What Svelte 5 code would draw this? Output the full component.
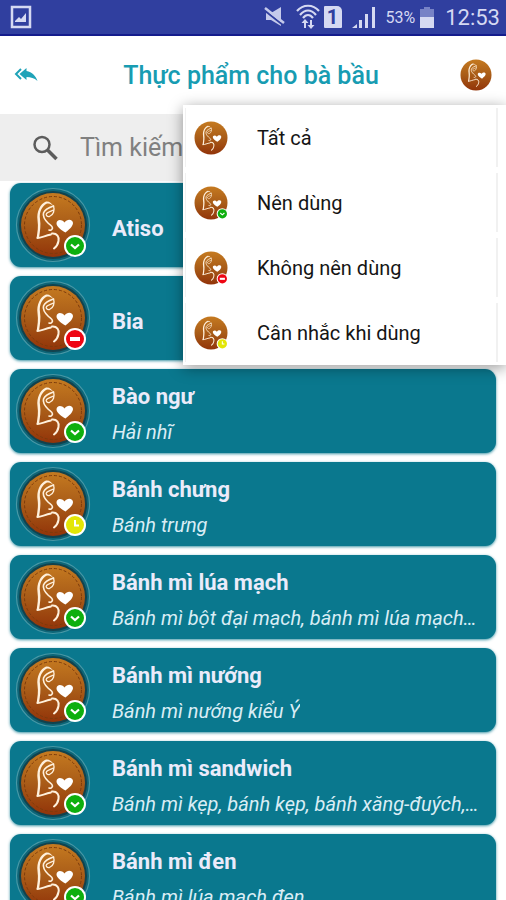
<script lang="ts">
	type Status = 'good' | 'bad' | 'careful';

	interface Food {
		name: string;
		alias?: string;
		status: Status;
	}

	interface Filter {
		label: string;
		status?: Status;
	}

	const foods: Food[] = [
		{ name: 'Atiso', status: 'good' },
		{ name: 'Bia', status: 'bad' },
		{ name: 'Bào ngư', alias: 'Hải nhĩ', status: 'good' },
		{ name: 'Bánh chưng', alias: 'Bánh trưng', status: 'careful' },
		{ name: 'Bánh mì lúa mạch', alias: 'Bánh mì bột đại mạch, bánh mì lúa mạch…', status: 'good' },
		{ name: 'Bánh mì nướng', alias: 'Bánh mì nướng kiểu Ý', status: 'good' },
		{ name: 'Bánh mì sandwich', alias: 'Bánh mì kẹp, bánh kẹp, bánh xăng-đuých,…', status: 'good' },
		{ name: 'Bánh mì đen', alias: 'Bánh mì lúa mạch đen', status: 'good' }
	];

	const filters: Filter[] = [
		{ label: 'Tất cả' },
		{ label: 'Nên dùng', status: 'good' },
		{ label: 'Không nên dùng', status: 'bad' },
		{ label: 'Cân nhắc khi dùng', status: 'careful' }
	];

	let query = $state('');
	let menuOpen = $state(true);
	let selected = $state<Status | undefined>(undefined);

	const visibleFoods = $derived(
		foods.filter(
			(food) =>
				(!selected || food.status === selected) &&
				food.name.toLowerCase().includes(query.toLowerCase())
		)
	);

	function pickFilter(filter: Filter) {
		selected = filter.status;
		menuOpen = false;
	}
</script>

{#snippet emblem(status: Status | undefined, small: boolean)}
	<svg class="emblem" viewBox={small ? '5 5 66 66' : '0 0 76 76'} aria-hidden="true">
		<defs>
			<linearGradient id="leather" x1="0" y1="0" x2="0" y2="1">
				<stop offset="0" stop-color="#c57a20" />
				<stop offset="0.5" stop-color="#a95c18" />
				<stop offset="1" stop-color="#923409" />
			</linearGradient>
		</defs>
		{#if !small}
			<circle cx="38" cy="38" r="36.5" fill="#0d6577" stroke="#4898a6" stroke-width="1.2" />
			<circle cx="38" cy="38" r="34" fill="#12424d" />
		{/if}
		<circle cx="38" cy="38" r="32" fill="url(#leather)" />
		{#if !small}
			<circle cx="38" cy="38" r="28.5" fill="none" stroke="#7c3b0c" stroke-width="1" stroke-dasharray="3 2" />
		{/if}
		<!-- veil, face, arm and belly -->
		<path
			d="M39 20C37 16 34 14 31 14.500C25 17 21.500 25 22.500 33C23.500 40 22.500 45 21.500 51.500L24 51C25 44 26 38 25 32C24 25 27 19 32 16.500C35 16 37 17.500 39 20Z"
			fill="#fff0dc"
		/>
		<g fill="none" stroke="#fff0dc" stroke-linecap="round" stroke-linejoin="round">
			<path d="M38.500 19C35.500 20 30 22 28.500 26C27.500 30 30 33 33 36C35 38 37.500 39 37.500 41C37 43 35.500 43.500 34 43" stroke-width="1.600" />
			<path d="M38.500 19C40 23 38.500 28 34.500 29.500C32 30 30.500 28 31.500 26.500C33 24.500 36 24.500 38.500 23" stroke-width="1.300" />
			<path d="M22.500 51C26 51 30 48.500 36 47.500" stroke-width="1.800" />
			<path d="M37 46.500C42 46 44.500 50 43.500 54C43 57 41 60 39 61.500" stroke-width="2" />
		</g>
		<path
			d="M50.500 45.500C47 43.500 41.500 40 41.500 36.500C41.500 33 46 31.500 49.500 35.500C52.500 31 58 32.500 58 36C58 39.500 53.500 43 50.500 45.500Z"
			fill="#fff"
		/>
		{#if status}
			<circle cx="60" cy="59" r="11" fill="#fff" />
			{#if status === 'good'}
				<circle cx="60" cy="59" r="9" fill="#0eaf0e" />
				<path d="M56 57.500L60 61L64 57.500" fill="none" stroke="#fff" stroke-width="2.200" />
			{:else if status === 'bad'}
				<circle cx="60" cy="59" r="9" fill="#ee0613" />
				<rect x="55" y="57" width="10" height="4" fill="#fff" />
			{:else}
				<circle cx="60" cy="59" r="9" fill="#e3e606" />
				<path d="M60 54V59.500H64" fill="none" stroke="#fff" stroke-width="2" />
			{/if}
		{/if}
	</svg>
{/snippet}

<div class="screen">
	<div class="status-bar">
		<svg width="22" height="24" viewBox="0 0 22 24" aria-hidden="true">
			<rect x="2" y="2" width="18" height="20" fill="none" stroke="#d5d9f2" stroke-width="2.500" />
			<path d="M5 16L9 12L11 14L16 8V17H5Z" fill="#d5d9f2" />
		</svg>
		<div class="indicators">
			<svg width="22" height="22" viewBox="0 0 22 22" aria-hidden="true">
				<path d="M2 7H7L17 1V20L7 14H2Z" fill="#c5caeb" />
				<path d="M0 4L19 19" stroke="#303f9f" stroke-width="2" />
				<path d="M1 2L20 17" stroke="#c5caeb" stroke-width="2.500" />
			</svg>
			<svg class="wifi" width="24" height="26" viewBox="0 0 24 26" aria-hidden="true">
				<g fill="none" stroke="#d5d9f2" stroke-width="2.200">
					<path d="M1 7C7 0 17 0 23 7" />
					<path d="M4 11C9 5 15 5 20 11" />
					<path d="M7 14C10 10 14 10 17 14" />
				</g>
				<path d="M9 15L5.500 19H8V24H10V19H12.500ZM15 25L18.500 21H16V16H14V21H11.500Z" fill="#d5d9f2" />
			</svg>
			<span class="sim">1</span>
			<svg class="signal" width="24" height="22" viewBox="0 0 24 22" aria-hidden="true">
				<path d="M0 22L5 18V22ZM7 14H10V22H7ZM13 8H16V22H13ZM20 1H23V22H20Z" fill="#d5d9f2" />
			</svg>
			<span class="percent">53%</span>
			<svg class="battery" width="16" height="21" viewBox="0 0 16 21" aria-hidden="true">
				<path d="M5 0H11V2H15V11H1V2H5Z" fill="#7782c6" />
				<path d="M1 10H15V21H1Z" fill="#d5d9f2" />
			</svg>
			<span class="clock">12:53</span>
		</div>
	</div>

	<header class="toolbar">
		<button class="icon-button" aria-label="Quay lại">
			<svg width="24" height="14" viewBox="0 0 24 14" aria-hidden="true">
				<path d="M7 1L2 6L7 11" fill="none" stroke="#1fa3b8" stroke-width="2" />
				<path d="M12.500 0V3C18 4 22 8 23.500 13C20 10 17 9 12.500 9V12L5.500 6Z" fill="#1fa3b8" />
			</svg>
		</button>
		<h1>Thực phẩm cho bà bầu</h1>
		<button
			class="icon-button filter-button"
			aria-label="Lọc"
			aria-expanded={menuOpen}
			onclick={() => (menuOpen = !menuOpen)}
		>
			{@render emblem(undefined, true)}
		</button>

		{#if menuOpen}
			<div class="menu" role="menu">
				{#each filters as filter (filter.label)}
					<button class="menu-item" role="menuitem" onclick={() => pickFilter(filter)}>
						{@render emblem(filter.status, true)}
						<span>{filter.label}</span>
					</button>
				{/each}
			</div>
		{/if}
	</header>

	<label class="search">
		<svg width="26" height="26" viewBox="0 0 26 26" fill="none" stroke="#5c5c5c" aria-hidden="true">
			<circle cx="10" cy="9.500" r="7.500" stroke-width="2.500" />
			<path d="M15.500 15L24.500 24" stroke-width="3.500" />
		</svg>
		<input type="text" placeholder="Tìm kiếm" aria-label="Tìm kiếm" bind:value={query} />
	</label>

	<ul class="foods">
		{#each visibleFoods as food (food.name)}
			<li>
				<button class="card">
					{@render emblem(food.status, false)}
					<span class="card-text">
						<span class="name">{food.name}</span>
						{#if food.alias}
							<span class="alias">{food.alias}</span>
						{/if}
					</span>
				</button>
			</li>
		{/each}
	</ul>
</div>

<style>
	:global(body) {
		background: #fff;
		font-family: Roboto, 'Noto Sans', sans-serif;
	}

	.screen {
		display: flex;
		flex-direction: column;
		height: 100vh;
		overflow: hidden;
	}

	button {
		padding: 0;
		border: none;
		background: none;
		font: inherit;
		text-align: left;
		cursor: pointer;
	}

	.emblem {
		display: block;
		flex-shrink: 0;
	}

	.status-bar {
		display: flex;
		flex-shrink: 0;
		align-items: center;
		justify-content: space-between;
		box-sizing: border-box;
		height: 36px;
		padding: 0 6px 0 10px;
		border-bottom: 2px solid #141c8c;
		background: #303f9f;
		color: #d5d9f2;
	}

	.indicators {
		display: flex;
		align-items: center;
	}

	.wifi {
		margin-left: 10px;
	}

	.sim {
		width: 18px;
		margin-left: 4px;
		border-radius: 1px 5px 1px 1px;
		background: #d5d9f2;
		color: #303f9f;
		font-size: 20px;
		font-weight: 700;
		line-height: 22px;
		text-align: center;
	}

	.signal {
		margin-left: 10px;
	}

	.percent {
		margin-left: 10px;
		font-size: 16px;
	}

	.battery {
		margin-left: 4px;
	}

	.clock {
		margin-left: 10px;
		font-size: 22px;
	}

	.toolbar {
		position: relative;
		z-index: 1;
		display: flex;
		flex-shrink: 0;
		align-items: center;
		justify-content: space-between;
		height: 78px;
		padding: 0 14px 0 10px;
	}

	.toolbar h1 {
		margin: 0;
		color: #189cb2;
		font-size: 25px;
		font-weight: 500;
		line-height: 30px;
		padding-top: 2px;
	}

	.icon-button {
		display: flex;
		justify-content: center;
		width: 32px;
	}

	.filter-button .emblem {
		width: 32px;
		height: 32px;
	}

	.menu {
		position: absolute;
		top: 69px;
		right: 0;
		display: flex;
		flex-direction: column;
		gap: 6px;
		box-sizing: border-box;
		width: 323px;
		padding: 3px 8px 3px 2px;
		background: #fff;
		box-shadow: 0 3px 14px rgba(0, 0, 0, 0.4);
	}

	.menu-item {
		display: flex;
		align-items: center;
		gap: 29px;
		box-sizing: border-box;
		width: 100%;
		height: 59px;
		padding: 0 8px;
		border: solid #f1f1f1;
		border-width: 0 2px 0 1px;
		color: #151515;
		font-size: 20px;
	}

	.menu-item .emblem {
		width: 34px;
		height: 34px;
	}

	.search {
		display: flex;
		flex-shrink: 0;
		align-items: center;
		gap: 22px;
		height: 67px;
		padding: 0 32px;
		background: #eee;
	}

	.search input {
		flex: 1;
		min-width: 0;
		padding: 0;
		border: none;
		outline: none;
		background: none;
		color: #333;
		font: inherit;
		font-size: 25px;
	}

	.search input::placeholder {
		color: #808080;
	}

	.foods {
		display: flex;
		flex: 1;
		flex-direction: column;
		gap: 9px;
		min-height: 0;
		margin: 0;
		padding: 2px 10px;
		overflow-y: auto;
		list-style: none;
		scrollbar-width: none;
	}

	.card {
		display: flex;
		align-items: center;
		gap: 21px;
		box-sizing: border-box;
		width: 100%;
		height: 84px;
		padding: 0 12px 0 5px;
		border-radius: 11px;
		background: #0a788e;
		box-shadow: 0 1px 3px rgba(10, 120, 142, 0.8);
		color: #ebebfa;
	}

	.card .emblem {
		width: 76px;
		height: 76px;
	}

	.card-text {
		display: flex;
		flex-direction: column;
		gap: 7px;
		min-width: 0;
		padding-top: 7px;
	}

	.name {
		font-size: 22px;
		font-weight: 700;
		line-height: 28px;
	}

	.alias {
		overflow: hidden;
		color: #d9edf5;
		font-size: 20px;
		font-style: italic;
		line-height: 28px;
		text-overflow: ellipsis;
		white-space: nowrap;
	}
</style>
